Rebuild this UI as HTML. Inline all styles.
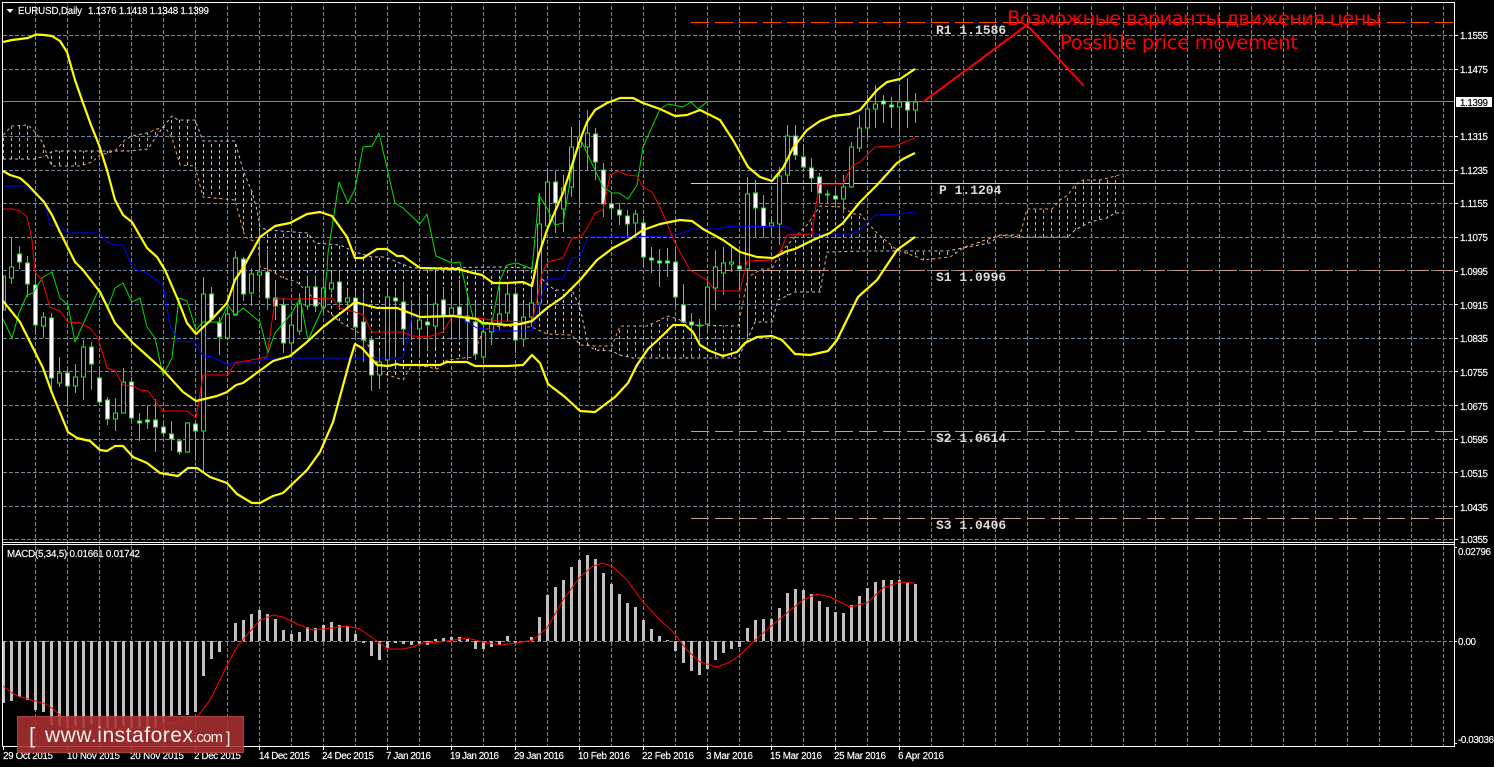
<!DOCTYPE html>
<html><head><meta charset="utf-8"><title>EURUSD Daily</title>
<style>html,body{margin:0;padding:0;background:#000;overflow:hidden}svg{display:block}
.a{font:9.8px "Liberation Sans",sans-serif;fill:#fff;stroke:#fff;stroke-width:.15}
.l{font:bold 13px "Liberation Mono",monospace;fill:#ddd}
.r{font:19.5px "DejaVu Sans","Liberation Sans",sans-serif;fill:#f00}
.t{fill:none;stroke-width:1;stroke-linejoin:round}
.y{fill:none;stroke:#ff0;stroke-width:2.2;stroke-linejoin:round}
</style></head><body>
<svg xmlns="http://www.w3.org/2000/svg" width="1494" height="767" viewBox="0 0 1494 767">
<defs>
<pattern id="v" width="32" height="6" patternUnits="userSpaceOnUse"><rect x="3" y="0" width="1" height="4" fill="#778899"/></pattern>
<pattern id="ho" width="8" height="6" patternUnits="userSpaceOnUse"><rect x="3" y="0" width="1" height="3" fill="#f4a460"/></pattern>
<pattern id="ht" width="8" height="6" patternUnits="userSpaceOnUse"><rect x="3" y="0" width="1" height="3" fill="#d8bfd8"/></pattern>
<clipPath id="cloud"><polygon clip-rule="evenodd" points="3,135 12,126 28,125 35,132 43,143 48,158 52,166 80,166 92,162 100,155 115,151 125,140 132,136 147,133 157,129 165,127 172,138 180,165 195,166 203,197 235,200 245,237 258,243 260,267 270,270 283,278 297,282 308,293 340,322 363,335 372,353 382,373 403,380 412,365 423,366 437,369 447,360 473,357 483,330 500,326 532,327 547,334 572,335 580,345 595,346 612,346 620,326 647,326 668,316 675,318 692,325 738,326 740,317 748,277 762,269 772,269 780,253 795,237 807,225 820,206 843,207 853,214 860,214 867,222 877,233 897,250 917,257 923,260 950,257 965,247 1000,235 1020,235 1027,209 1052,209 1060,200 1068,195 1075,185 1083,180 1100,180 1123,174 1123,213 1115,213 1107,218 1090,222 1075,230 1068,237 1020,237 1000,235 990,243 947,251 897,251 867,251 827,252 820,292 795,292 778,300 772,322 755,322 748,338 738,358 633,358 620,355 612,351 595,350 588,345 580,307 572,290 555,290 547,284 532,268 500,267 412,268 385,257 372,257 355,252 340,245 315,243 308,233 267,230 260,227 257,210 252,192 243,170 235,141 203,141 195,120 178,120 172,116 163,127 148,149 130,151 52,151 48,155 35,159 3,159"/></clipPath>
</defs>
<rect width="1494" height="767" fill="#000"/>

<!-- grid -->
<rect x="4" y="3" width="1450" height="743" fill="url(#v)"/>
<path shape-rendering="crispEdges" stroke="#778899" stroke-dasharray="4 2" fill="none" d="M3 35.5H1454M3 69.5H1454M3 136.5H1454M3 170.5H1454M3 203.5H1454M3 237.5H1454M3 270.5H1454M3 304.5H1454M3 338.5H1454M3 371.5H1454M3 405.5H1454M3 439.5H1454M3 472.5H1454M3 506.5H1454M3 539.5H1454M3 641.5H1454"/>
<path shape-rendering="crispEdges" stroke="#778899" fill="none" d="M3 101.5H1454"/>

<!-- ichimoku cloud -->
<g clip-path="url(#cloud)" shape-rendering="crispEdges">
<rect x="0" y="100" width="50" height="300" fill="url(#ho)"/>
<rect x="50" y="100" width="80" height="300" fill="url(#ht)"/>
<rect x="130" y="100" width="35" height="300" fill="url(#ho)"/>
<rect x="165" y="100" width="447" height="300" fill="url(#ht)"/>
<rect x="612" y="100" width="520" height="300" fill="url(#ho)"/>
</g>
<polyline class="t" stroke="#f4a460" stroke-dasharray="3 3" points="3,135 12,126 28,125 35,132 43,143 48,158 52,166 80,166 92,162 100,155 115,151 125,140 132,136 147,133 157,129 165,127 172,138 180,165 195,166 203,197 235,200 245,237 258,243 260,267 270,270 283,278 297,282 308,293 340,322 363,335 372,353 382,373 403,380 412,365 423,366 437,369 447,360 473,357 483,330 500,326 532,327 547,334 572,335 580,345 595,346 612,346 620,326 647,326 668,316 675,318 692,325 738,326 740,317 748,277 762,269 772,269 780,253 795,237 807,225 820,206 843,207 853,214 860,214 867,222 877,233 897,250 917,257 923,260 950,257 965,247 1000,235 1020,235 1027,209 1052,209 1060,200 1068,195 1075,185 1083,180 1100,180 1123,174"/>
<polyline class="t" stroke="#d8bfd8" stroke-dasharray="3 3" points="3,159 35,159 48,155 52,151 130,151 148,149 163,127 172,116 178,120 195,120 203,141 235,141 243,170 252,192 257,210 260,227 267,230 308,233 315,243 340,245 355,252 372,257 385,257 412,268 500,267 532,268 547,284 555,290 572,290 580,307 588,345 595,350 612,351 620,355 633,358 738,358 748,338 755,322 772,322 778,300 795,292 820,292 827,252 867,251 897,251 947,251 990,243 1000,235 1020,237 1068,237 1075,230 1090,222 1107,218 1115,213 1123,213"/>

<!-- pivot levels -->
<g shape-rendering="crispEdges" fill="none">
<path stroke="#ff4500" stroke-dasharray="18 6" d="M691 22.5H1454"/>
<path stroke="#ffd24a" d="M691 183.5H1454"/>
<path stroke="#c89888" stroke-dasharray="18 6" d="M691 270.5H1454"/>
<path stroke="#c8a098" stroke-dasharray="18 6" d="M691 431.5H1454"/>
<path stroke="#c8a098" stroke-dasharray="18 6" d="M691 518.5H1454"/>
</g>

<!-- wicks -->
<path shape-rendering="crispEdges" stroke="#00ff00" fill="none" d="M11.5 238V284M19.5 246V269M27.5 256V297M35.5 273V335M43.5 312V338M51.5 313V392M59.5 357V387M67.5 369V407M75.5 364V393M83.5 340V400M91.5 342V390M99.5 369V405M107.5 397V425M115.5 398V431M123.5 368V413M131.5 377V420M139.5 413V441M147.5 406V429M155.5 399V452M163.5 422V437M171.5 421V451M179.5 440V455M187.5 422V453M195.5 422V461M203.5 277V473M211.5 287V320M219.5 317V355M227.5 305V340M235.5 251V316M243.5 257V301M251.5 268V306M259.5 230V293M267.5 250V310M275.5 280V320M283.5 298V353M291.5 313V353M299.5 293V335M307.5 277V310M315.5 277V312M323.5 273V313M331.5 273V293M339.5 272V310M347.5 290V310M355.5 290V337M363.5 292V362M371.5 337V391M379.5 350V389M387.5 290V365M395.5 290V357M403.5 283V343M411.5 300V340M419.5 293V357M427.5 297V350M435.5 273V348M443.5 287V332M451.5 293V337M459.5 280V340M467.5 293V360M475.5 303V360M483.5 323V360M491.5 318V345M499.5 285V330M507.5 285V320M515.5 287V353M523.5 303V347M531.5 283V327M539.5 193V313M547.5 168V230M555.5 170V233M563.5 175V232M571.5 127V197M579.5 120V203M587.5 110V170M595.5 128V180M603.5 163V217M611.5 195V220M619.5 203V225M627.5 210V237M635.5 210V237M643.5 217V268M651.5 247V273M659.5 249V287M667.5 248V277M675.5 248V307M683.5 284V323M691.5 313V337M699.5 319V343M707.5 278V333M715.5 250V310M723.5 247V295M731.5 247V272M739.5 253V290M747.5 177V340M755.5 180V237M763.5 195V238M771.5 217V238M779.5 167V245M787.5 125V183M795.5 125V160M803.5 145V168M811.5 158V192M819.5 173V203M827.5 190V203M835.5 190V207M843.5 175V213M851.5 142V188M859.5 115V152M867.5 95V138M875.5 85V128M883.5 95V123M891.5 97V128M899.5 87V132M907.5 78V128M915.5 93V123"/>
<!-- bull bodies -->
<path shape-rendering="crispEdges" stroke="#00ff00" fill="#000" d="M3.5 276h2v34h-2zM9.5 267h4v11h-4zM41.5 317h4v9h-4zM57.5 373h4v10h-4zM73.5 377h4v9h-4zM81.5 347h4v30h-4zM113.5 413h4v6h-4zM121.5 382h4v31h-4zM185.5 423h4v29h-4zM201.5 294h4v137h-4zM225.5 314h4v24h-4zM233.5 258h4v57h-4zM249.5 274h4v19h-4zM257.5 272h4v3h-4zM289.5 325h4v18h-4zM297.5 304h4v27h-4zM305.5 287h4v19h-4zM321.5 288h4v19h-4zM329.5 283h4v6h-4zM345.5 298h4v4h-4zM377.5 362h4v13h-4zM385.5 297h4v63h-4zM417.5 320h4v9h-4zM433.5 304h4v22h-4zM449.5 308h4v7h-4zM481.5 332h4v25h-4zM489.5 323h4v9h-4zM497.5 314h4v9h-4zM505.5 294h4v19h-4zM521.5 317h4v22h-4zM529.5 303h4v14h-4zM537.5 224h4v79h-4zM545.5 182h4v44h-4zM561.5 188h4v21h-4zM569.5 147h4v40h-4zM577.5 137h4v10h-4zM585.5 133h4v14h-4zM633.5 214h4v9h-4zM705.5 287h4v37h-4zM713.5 267h4v21h-4zM721.5 263h4v10h-4zM729.5 262h4v2h-4zM745.5 194h4v75h-4zM769.5 223h4v3h-4zM777.5 176h4v48h-4zM785.5 136h4v39h-4zM841.5 187h4v12h-4zM849.5 147h4v40h-4zM857.5 128h4v20h-4zM865.5 109h4v19h-4zM873.5 104h4v5h-4zM897.5 102h4v5h-4zM913.5 102h4v8h-4z"/>
<!-- bear bodies -->
<path shape-rendering="crispEdges" stroke="#00ff00" fill="#fff" d="M17.5 254h4v8h-4zM25.5 263h4v21h-4zM33.5 285h4v40h-4zM49.5 318h4v60h-4zM65.5 373h4v13h-4zM89.5 347h4v17h-4zM97.5 378h4v24h-4zM105.5 400h4v19h-4zM129.5 382h4v36h-4zM137.5 421h4v2h-4zM145.5 420h4v2h-4zM153.5 420h4v7h-4zM161.5 427h4v6h-4zM169.5 434h4v5h-4zM177.5 441h4v11h-4zM193.5 424h4v7h-4zM209.5 294h4v25h-4zM217.5 323h4v14h-4zM241.5 259h4v35h-4zM265.5 272h4v26h-4zM273.5 298h4v8h-4zM281.5 305h4v38h-4zM313.5 287h4v19h-4zM337.5 282h4v20h-4zM353.5 298h4v29h-4zM361.5 322h4v18h-4zM369.5 340h4v35h-4zM393.5 298h4v3h-4zM401.5 302h4v27h-4zM425.5 322h4v3h-4zM441.5 300h4v15h-4zM457.5 307h4v8h-4zM465.5 316h4v6h-4zM473.5 322h4v32h-4zM513.5 294h4v46h-4zM553.5 182h4v21h-4zM593.5 134h4v28h-4zM601.5 170h4v34h-4zM609.5 204h4v4h-4zM617.5 210h4v5h-4zM625.5 216h4v8h-4zM641.5 223h4v34h-4zM649.5 258h4v2h-4zM657.5 261h4v2h-4zM665.5 261h4v2h-4zM673.5 262h4v35h-4zM681.5 305h4v17h-4zM689.5 322h4v3h-4zM697.5 325h4v1h-4zM737.5 266h4v3h-4zM753.5 193h4v15h-4zM761.5 208h4v18h-4zM793.5 136h4v19h-4zM801.5 157h4v10h-4zM809.5 168h4v10h-4zM817.5 177h4v16h-4zM825.5 194h4v1h-4zM833.5 196h4v3h-4zM881.5 101h4v3h-4zM889.5 105h4v2h-4zM905.5 102h4v8h-4z"/>

<!-- chikou (green) -->
<polyline class="t" stroke="#00e000" points="3,319 12,338 19,313 27,295 33,293 43,277 52,272 60,298 68,305 75,342 99,289 108,307 115,288 123,283 132,302 140,298 147,327 155,338 163,375 172,358 179,298 187,301 196,330 203,322 220,322 228,305 235,315 243,308 260,322 268,353 275,333 292,313 300,298 308,340 323,307 327,270 328,253 339,182 348,203 355,189 363,147 372,146 379,133 395,203 403,208 420,224 427,214 436,256 452,263 460,262 467,293 473,317 483,325 492,323 500,280 507,265 517,263 532,269 539,195 548,210 555,225 563,223 572,170 580,138 587,153 603,187 612,193 619,193 628,199 637,185 643,147 660,109 668,104 683,107 691,102 698,109 707,102"/>
<!-- kijun (blue) -->
<polyline class="t" stroke="#0000ff" points="3,186 25,186 35,194 44,200 50,225 60,226 68,233 100,233 107,242 115,245 123,245 132,267 137,270 147,273 163,285 170,325 178,341 195,342 203,356 213,357 228,365 235,362 255,362 267,358 403,358 412,317 457,316 477,328 500,331 532,331 540,302 547,279 563,279 572,258 580,257 588,237 675,236 692,229 717,229 730,226 787,227 797,234 852,234 860,230 875,215 900,214 915,212"/>
<!-- tenkan (red) -->
<polyline class="t" stroke="#ff0000" points="3,209 13,209 20,211 27,217 29,225 32,240 35,272 42,280 50,307 60,311 68,322 80,323 90,328 98,338 107,368 115,371 123,385 133,386 140,390 148,391 163,411 187,411 196,418 203,375 228,375 235,363 267,357 275,299 300,299 332,298 340,308 355,312 363,315 372,332 403,332 412,336 428,337 443,332 453,315 500,321 532,322 537,300 542,273 548,262 563,258 572,238 580,238 588,227 595,213 603,210 610,175 618,171 627,175 637,176 643,187 652,192 660,207 675,243 690,270 707,280 715,291 740,291 747,261 772,260 780,252 787,235 812,234 819,184 843,184 852,166 860,162 875,147 895,146 915,138"/>
<!-- bollinger -->
<polyline class="y" points="3,42 12,40 28,38 36,34.5 44,35 52,36 60,41 67,52 75,80 83,103 91,125 99,145 107,170 115,200 123,215 132,222 147,248 157,257 165,270 178,300 187,323 196,334 213,318 227,303 235,280 243,268 260,237 275,226 290,223 307,214 320,212 332,216 347,237 355,258 363,258 377,249 387,249 397,256 403,256 420,268 458,269 473,273 482,275 493,283 507,283 523,282 532,286 538,257 547,230 563,193 580,140 587,122 595,110 607,103 620,98 633,98 643,103 660,109 675,116 687,115 700,110 720,120 733,140 748,167 760,177 772,181 783,168 793,148 807,130 820,121 833,116 850,114 860,110 877,90 887,82 900,79 915,69"/>
<polyline class="y" points="3,171 10,175 20,178 28,185 44,202 52,215 60,232 67,246 75,262 83,270 100,292 115,323 133,343 163,370 183,392 196,401 217,396 227,392 236,385 243,383 273,361 290,356 307,342 323,327 355,302 377,308 397,308 420,317 453,316 477,319 483,323 507,325 520,324 532,321 547,308 563,297 580,280 597,260 613,248 630,239 643,230 660,224 680,220 692,221 703,229 723,240 740,252 757,257 773,258 787,251 795,249 813,240 830,233 843,223 860,202 877,185 897,163 903,159 915,153"/>
<polyline class="y" points="3,301 20,322 33,348 43,368 52,393 68,432 77,438 90,441 100,450 107,451 115,446 123,446 133,457 147,463 160,473 178,476 188,468 197,468 210,477 227,483 237,494 252,503 260,503 273,496 283,493 307,470 320,452 333,422 350,360 355,344 362,348 377,365 388,366 397,364 400,365 440,365 447,362 467,362 475,366 508,366 523,365 532,355 540,363 548,384 565,397 580,411 595,412 615,397 628,383 637,365 648,349 660,338 673,325 685,325 693,332 700,345 710,351 723,356 737,352 745,343 757,337 772,336 782,340 795,354 810,355 828,351 837,340 858,297 877,280 897,250 908,242 915,237"/>

<!-- MACD histogram -->
<path shape-rendering="crispEdges" stroke="#c0c0c0" stroke-width="3" fill="none" d="M3.5 641V703M11.5 641V701M19.5 641V697M27.5 641V700M35.5 641V710M43.5 641V712M51.5 641V725M59.5 641V726M67.5 641V728M75.5 641V726M83.5 641V728M91.5 641V724M99.5 641V727M107.5 641V728M115.5 641V729M123.5 641V726M131.5 641V728M139.5 641V727M147.5 641V728M155.5 641V728M163.5 641V723M171.5 641V717M179.5 641V715M187.5 641V715M195.5 641V712M203.5 641V676M211.5 641V659M219.5 641V652M235.5 641V623M243.5 641V620M251.5 641V614M259.5 641V610M267.5 641V614M275.5 641V619M283.5 641V630M291.5 641V634M299.5 641V632M307.5 641V627M315.5 641V628M323.5 641V625M331.5 641V622M339.5 641V625M347.5 641V626M355.5 641V634M363.5 641V643M371.5 641V656M379.5 641V660M387.5 641V648M395.5 641V643M403.5 641V644M411.5 641V645M419.5 641V644M427.5 641V645M435.5 641V639M443.5 641V638M451.5 641V637M459.5 641V637M467.5 641V639M475.5 641V649M483.5 641V649M491.5 641V647M499.5 641V645M507.5 641V636M515.5 641V643M531.5 641V637M539.5 641V617M547.5 641V595M555.5 641V587M563.5 641V580M571.5 641V567M579.5 641V560M587.5 641V555M595.5 641V559M603.5 641V573M611.5 641V584M619.5 641V594M627.5 641V603M635.5 641V607M643.5 641V620M651.5 641V629M659.5 641V636M667.5 641V640M675.5 641V651M683.5 641V663M691.5 641V671M699.5 641V675M707.5 641V669M715.5 641V660M723.5 641V653M731.5 641V649M739.5 641V647M747.5 641V628M755.5 641V620M763.5 641V619M771.5 641V619M779.5 641V608M787.5 641V593M795.5 641V589M803.5 641V590M811.5 641V594M819.5 641V601M827.5 641V607M835.5 641V612M843.5 641V613M851.5 641V605M859.5 641V596M867.5 641V588M875.5 641V582M883.5 641V580M891.5 641V580M899.5 641V580M907.5 641V583M915.5 641V584"/>
<polyline class="t" stroke="#ff0000" points="3,686 12,693 20,697 28,699 43,703 52,708 60,715 70,727 80,730 100,729 133,728 150,727 173,723 197,717 210,700 220,680 228,663 237,647 247,635 260,620 273,615 283,617 297,624 313,630 333,628 347,626 360,629 377,641 388,649 403,649 413,647 423,643 440,642 467,638 483,642 500,645 517,643 533,640 547,628 563,600 580,577 593,566 603,563 613,567 627,580 643,602 660,620 673,632 687,650 700,662 717,667 730,662 740,655 753,642 770,627 787,613 803,600 817,594 830,597 850,607 867,603 883,588 900,582 915,583"/>

<!-- frame -->
<path shape-rendering="crispEdges" stroke="#fff" fill="none" d="M2.5 2.5H1454.5V746.5H2.5ZM2.5 542.5H1454.5M2.5 544.5H1454.5"/>
<path shape-rendering="crispEdges" stroke="#fff" fill="none" d="M1455 35.5h3M1455 69.5h3M1455 136.5h3M1455 170.5h3M1455 203.5h3M1455 237.5h3M1455 271.5h3M1455 304.5h3M1455 338.5h3M1455 371.5h3M1455 405.5h3M1455 439.5h3M1455 472.5h3M1455 506.5h3M1455 539.5h3M1455 641.5h2M1455 547.5h2M1455 743.5h2M3.5 747v3M67.5 747v3M131.5 747v3M195.5 747v3M259.5 747v3M323.5 747v3M387.5 747v3M451.5 747v3M515.5 747v3M579.5 747v3M643.5 747v3M707.5 747v3M771.5 747v3M835.5 747v3M899.5 747v3"/>

<!-- annotation -->
<polyline fill="none" stroke="#f00" stroke-width="2" points="923,102 1027,25 1084,86"/>
<text class="r" x="1007" y="25" textLength="374" lengthAdjust="spacing">Возможные варианты движения цены</text>
<text class="r" x="1060" y="49" textLength="238" lengthAdjust="spacing">Possible price movement</text>
<text class="l" x="936" y="34">R1 1.1586</text>
<text class="l" x="939" y="194">P 1.1204</text>
<text class="l" x="936" y="281">S1 1.0996</text>
<text class="l" x="936" y="442">S2 1.0614</text>
<text class="l" x="936" y="529">S3 1.0406</text>

<!-- header -->
<polygon points="6.5,9 13.5,9 10,13" fill="#fff"/>
<text class="a" x="18" y="14" textLength="64" lengthAdjust="spacing">EURUSD,Daily</text>
<text class="a" x="88" y="14" textLength="121" lengthAdjust="spacing">1.1376 1.1418 1.1348 1.1399</text>
<text class="a" x="7" y="557" textLength="133" lengthAdjust="spacing">MACD(5,34,5) 0.01661 0.01742</text>

<!-- price axis -->
<text class="a" x="1460" y="39" textLength="28">1.1555</text>
<text class="a" x="1460" y="73" textLength="28">1.1475</text>
<rect x="1456" y="97" width="36" height="10" fill="#fff"/>
<text class="a" x="1460" y="106" textLength="28" style="fill:#000;stroke:#000">1.1399</text>
<text class="a" x="1460" y="140" textLength="28">1.1315</text>
<text class="a" x="1460" y="174" textLength="28">1.1235</text>
<text class="a" x="1460" y="207" textLength="28">1.1155</text>
<text class="a" x="1460" y="241" textLength="28">1.1075</text>
<text class="a" x="1460" y="275" textLength="28">1.0995</text>
<text class="a" x="1460" y="309" textLength="28">1.0915</text>
<text class="a" x="1460" y="342" textLength="28">1.0835</text>
<text class="a" x="1460" y="376" textLength="28">1.0755</text>
<text class="a" x="1460" y="410" textLength="28">1.0675</text>
<text class="a" x="1460" y="443" textLength="28">1.0595</text>
<text class="a" x="1460" y="477" textLength="28">1.0515</text>
<text class="a" x="1460" y="511" textLength="28">1.0435</text>
<text class="a" x="1460" y="543" textLength="28">1.0355</text>
<text class="a" x="1458" y="555" textLength="33">0.02796</text>
<text class="a" x="1458" y="645" textLength="18">0.00</text>
<text class="a" x="1458" y="743" textLength="36">-0.03036</text>

<!-- time axis -->
<text class="a" x="3" y="759" textLength="50">29 Oct 2015</text>
<text class="a" x="67" y="759" textLength="53">10 Nov 2015</text>
<text class="a" x="130" y="759" textLength="54">20 Nov 2015</text>
<text class="a" x="194" y="759" textLength="47">2 Dec 2015</text>
<text class="a" x="259" y="759" textLength="51">14 Dec 2015</text>
<text class="a" x="322" y="759" textLength="52">24 Dec 2015</text>
<text class="a" x="386" y="759" textLength="45">7 Jan 2016</text>
<text class="a" x="450" y="759" textLength="49">19 Jan 2016</text>
<text class="a" x="514" y="759" textLength="50">29 Jan 2016</text>
<text class="a" x="578" y="759" textLength="52">10 Feb 2016</text>
<text class="a" x="642" y="759" textLength="52">22 Feb 2016</text>
<text class="a" x="706" y="759" textLength="47">3 Mar 2016</text>
<text class="a" x="770" y="759" textLength="52">15 Mar 2016</text>
<text class="a" x="834" y="759" textLength="52">25 Mar 2016</text>
<text class="a" x="898" y="759" textLength="46">6 Apr 2016</text>

<!-- watermark -->
<rect x="17" y="716" width="227" height="37" fill="#a93030" fill-opacity=".88"/>
<rect x="17.5" y="716.5" width="226" height="36" fill="none" stroke="#c05050" stroke-opacity=".6"/>
<text x="29" y="743" font-family="Liberation Sans,sans-serif" font-size="22" fill="#eee">[</text>
<text x="45" y="742" font-family="Liberation Sans,sans-serif" font-size="21" fill="#f4f0f0" textLength="148" lengthAdjust="spacing">www.instaforex</text>
<text x="193" y="742" font-family="Liberation Sans,sans-serif" font-size="15" fill="#f4f0f0" textLength="30" lengthAdjust="spacing">.com</text>
<text x="226" y="743" font-family="Liberation Sans,sans-serif" font-size="16" fill="#eee">]</text>
</svg>
</body></html>
